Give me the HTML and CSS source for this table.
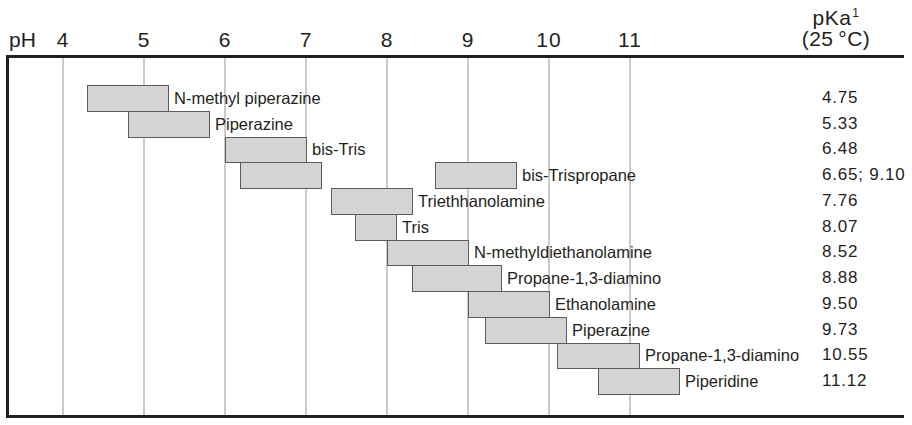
FILE: index.html
```html
<!DOCTYPE html>
<html lang="en">
<head>
<meta charset="utf-8">
<title>Buffer pH ranges</title>
<link rel="stylesheet" href="styles.css">
</head>
<body>
<div class="page">
  <div class="header">
    <div class="ph">pH</div>
    <div class="axis">
      <span class="tick">4</span>
      <span class="tick">5</span>
      <span class="tick">6</span>
      <span class="tick">7</span>
      <span class="tick">8</span>
      <span class="tick">9</span>
      <span class="tick">10</span>
      <span class="tick">11</span>
    </div>
    <div class="pka-head">
      <div class="pka-line">pKa<sup class="sup">1</sup></div>
      <div class="pka-line">(25&#8201;°C)</div>
    </div>
  </div>
  <div class="chart">
    <div class="row"><div class="track"><div class="bar" style="margin-left:78px;width:82px"></div><span class="label">N-methyl piperazine</span></div><div class="pka">4.75</div></div>
    <div class="row"><div class="track"><div class="bar" style="margin-left:119px;width:82px"></div><span class="label">Piperazine</span></div><div class="pka">5.33</div></div>
    <div class="row"><div class="track"><div class="bar" style="margin-left:216px;width:82px"></div><span class="label">bis-Tris</span></div><div class="pka">6.48</div></div>
    <div class="row"><div class="track"><div class="bar" style="margin-left:231px;width:82px"></div><div class="bar" style="margin-left:113px;width:82px"></div><span class="label">bis-Trispropane</span></div><div class="pka">6.65; 9.10</div></div>
    <div class="row"><div class="track"><div class="bar" style="margin-left:322px;width:82px"></div><span class="label">Triethhanolamine</span></div><div class="pka">7.76</div></div>
    <div class="row"><div class="track"><div class="bar" style="margin-left:346px;width:42px"></div><span class="label">Tris</span></div><div class="pka">8.07</div></div>
    <div class="row"><div class="track"><div class="bar" style="margin-left:378px;width:82px"></div><span class="label">N-methyldiethanolamine</span></div><div class="pka">8.52</div></div>
    <div class="row"><div class="track"><div class="bar" style="margin-left:403px;width:90px"></div><span class="label">Propane-1,3-diamino</span></div><div class="pka">8.88</div></div>
    <div class="row"><div class="track"><div class="bar" style="margin-left:459px;width:82px"></div><span class="label">Ethanolamine</span></div><div class="pka">9.50</div></div>
    <div class="row"><div class="track"><div class="bar" style="margin-left:476px;width:82px"></div><span class="label">Piperazine</span></div><div class="pka">9.73</div></div>
    <div class="row"><div class="track"><div class="bar" style="margin-left:548px;width:83px"></div><span class="label">Propane-1,3-diamino</span></div><div class="pka">10.55</div></div>
    <div class="row"><div class="track"><div class="bar" style="margin-left:589px;width:82px"></div><span class="label">Piperidine</span></div><div class="pka">11.12</div></div>
  </div>
</div>
</body>
</html>
```
FILE: styles.css
```css
html, body {
  margin: 0;
  padding: 0;
  background: #ffffff;
}

body {
  font-family: "Liberation Sans", Arial, sans-serif;
  color: #231f20;
  width: 912px;
  height: 425px;
  overflow: hidden;
}

.page {
  width: 912px;
}

.header {
  display: flex;
  align-items: flex-start;
  height: 55px;
  padding-left: 9px;
  box-sizing: border-box;
  font-size: 21px;
}

.ph {
  width: 34px;
  padding-top: 28px;
  line-height: 24px;
}

.axis {
  display: flex;
  gap: 41px;
  padding-top: 28px;
  line-height: 24px;
}

.tick {
  width: 40px;
  text-align: center;
  letter-spacing: 1px;
}

.pka-head {
  margin-left: auto;
  margin-right: 36px;
  width: 80px;
  padding-top: 7px;
  text-align: center;
  letter-spacing: 0.5px;
}

.pka-line {
  height: 21px;
  line-height: 21px;
}

.sup {
  font-size: 12px;
  vertical-align: 8px;
  line-height: 0;
  margin-left: 1px;
}

.chart {
  margin-left: 6px;
  width: 898px;
  box-sizing: border-box;
  height: 363px;
  border-top: 3px solid #231f20;
  border-bottom: 3px solid #231f20;
  border-left: 3px solid #231f20;
  padding-top: 27px;
  background-image: repeating-linear-gradient(to right, #cacaca 0 2px, transparent 2px 81px);
  background-size: 569px 100%;
  background-position: 53px 0;
  background-repeat: no-repeat;
}

.row {
  display: grid;
  grid-template-columns: 813px 1fr;
  height: 25.75px;
  align-items: center;
}

.track {
  display: flex;
  align-items: flex-start;
  height: 100%;
  white-space: nowrap;
}

.bar {
  flex: none;
  box-sizing: border-box;
  height: calc(100% + 1px);
  background: #d4d4d5;
  border: 1px solid #5b5b5d;
}

.label {
  align-self: center;
  margin-left: 5px;
  font-size: 16.5px;
  line-height: 20px;
}

.pka {
  font-size: 17px;
  letter-spacing: 0.8px;
  line-height: 20px;
  white-space: nowrap;
}
```
